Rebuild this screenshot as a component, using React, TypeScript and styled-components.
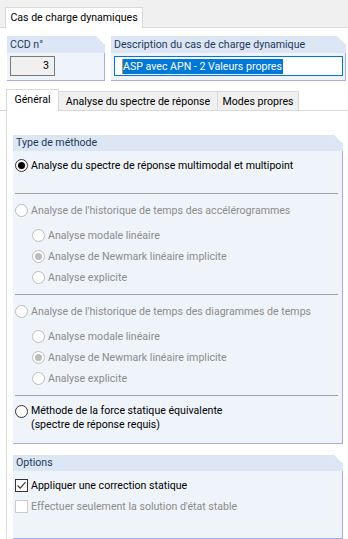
import React from 'react';
import styled, { createGlobalStyle } from 'styled-components';

const GlobalStyle = createGlobalStyle`
  html, body {
    margin: 0;
    padding: 0;
    background: #ffffff;
  }
  body {
    font-family: Roboto, 'Noto Sans', sans-serif;
    font-size: 10.6px;
    color: #000000;
    white-space: nowrap;
  }
`;

const navy = '#23395b';
const lavender = '#a9a9ec';
const headerBlue = '#dce6f4';
const bodyBlue = '#eff3fa';

const Window = styled.div`
  width: 348px;
  height: 539px;
  overflow: hidden;
  display: flex;
  flex-direction: column;
  background: #ffffff;
`;

const TopStrip = styled.div`
  box-sizing: border-box;
  height: 28px;
  padding: 7px 0 0 5px;
  display: flex;
  align-items: flex-end;
  background: #f0f0f0;
  border-bottom: 1px solid #d9d9d9;
`;

const TopTab = styled.div`
  box-sizing: border-box;
  width: 138px;
  height: 21px;
  margin-bottom: -1px;
  background: #ffffff;
  border: 1px solid #d9d9d9;
  border-bottom: none;
  display: flex;
  align-items: center;
  justify-content: center;
  padding-bottom: 1px;
`;

const HeaderRow = styled.div`
  display: flex;
  gap: 6px;
  padding: 8px 2px 0 7px;
`;

const Group = styled.div<{ $width?: number; $grow?: boolean }>`
  box-sizing: border-box;
  ${(p) => (p.$width ? `width: ${p.$width}px;` : '')}
  ${(p) => (p.$grow ? 'flex: 1;' : '')}
  display: flex;
  flex-direction: column;
  background: ${bodyBlue};
  border-right: 1px solid ${lavender};
  border-bottom: 1px solid ${lavender};
  clip-path: polygon(0 0, calc(100% - 9px) 0, 100% 9px, 100% 100%, 0 100%);
`;

const GroupTitle = styled.div<{ $height?: number }>`
  height: ${(p) => p.$height ?? 16}px;
  line-height: ${(p) => p.$height ?? 16}px;
  padding-left: 3px;
  background: ${headerBlue};
  color: ${navy};
  margin-right: -1px;
`;

const SmallBody = styled.div`
  padding: 3px 2px 4px 3px;
  display: flex;
`;

const NumberInput = styled.div`
  box-sizing: border-box;
  width: 45px;
  height: 20px;
  background: #f0f0f0;
  border: 1px solid #7a7a7a;
  text-align: right;
  padding-right: 5px;
  line-height: 18px;
`;

const TextInput = styled.div`
  box-sizing: border-box;
  flex: 1;
  height: 20px;
  border: 1px solid #0078d7;
  background: #ffffff;
  padding-left: 7px;
  display: flex;
  align-items: center;
`;

const Selected = styled.span`
  background: #0078d7;
  color: #ffffff;
  line-height: 15px;
  padding-right: 1px;
  border-left: 1px solid #e08a2c;
`;

const TabBar = styled.div`
  margin-top: 8px;
  height: 21px;
  padding-left: 6px;
  display: flex;
  align-items: flex-end;
  border-bottom: 1px solid #d9d9d9;
`;

const Tab = styled.div<{ $width: number; $active?: boolean }>`
  box-sizing: border-box;
  width: ${(p) => p.$width}px;
  height: ${(p) => (p.$active ? 22 : 19)}px;
  margin-bottom: ${(p) => (p.$active ? -1 : 0)}px;
  margin-right: -1px;
  background: ${(p) => (p.$active ? '#ffffff' : '#f0f0f0')};
  border: 1px solid #d9d9d9;
  border-bottom: none;
  position: relative;
  z-index: ${(p) => (p.$active ? 1 : 0)};
  display: flex;
  align-items: center;
  justify-content: center;
  padding-bottom: ${(p) => (p.$active ? 2 : 0)}px;
`;

const TabPage = styled.div`
  flex: 1;
  margin-left: 6px;
  border-left: 1px solid #d9d9d9;
  padding: 24px 5px 0 6px;
  display: flex;
  flex-direction: column;
`;

const GroupBody = styled.div<{ $pb?: number }>`
  display: flex;
  flex-direction: column;
  padding: 4px 0 ${(p) => p.$pb ?? 0}px 2px;
`;

const Row = styled.div<{ $indent?: boolean; $disabled?: boolean; $h?: number }>`
  height: ${(p) => p.$h ?? (p.$indent ? 21 : 20)}px;
  display: flex;
  align-items: center;
  gap: 3px;
  padding-left: ${(p) => (p.$indent ? 17 : 0)}px;
  color: ${(p) => (p.$disabled ? '#8c8c8c' : '#000000')};
`;

const MultiRow = styled.div`
  display: flex;
  align-items: flex-start;
  gap: 3px;
  margin-top: 8px;
  line-height: 14px;
`;

const SubList = styled.div`
  margin-top: 5px;
  display: flex;
  flex-direction: column;
`;

const Separator = styled.div<{ $top: number; $bottom: number }>`
  height: 1px;
  background: #a0a0a0;
  margin: ${(p) => p.$top}px 4px ${(p) => p.$bottom}px 0;
`;

const Radio = styled.span<{ $checked?: boolean; $disabled?: boolean }>`
  box-sizing: border-box;
  flex: none;
  width: 13px;
  height: 13px;
  border-radius: 50%;
  border: 1px solid ${(p) => (p.$disabled ? '#bcbcbc' : '#333333')};
  background: #ffffff;
  display: flex;
  align-items: center;
  justify-content: center;
  &::after {
    content: '';
    display: ${(p) => (p.$checked ? 'block' : 'none')};
    width: 7px;
    height: 7px;
    border-radius: 50%;
    background: ${(p) => (p.$disabled ? '#bcbcbc' : '#000000')};
  }
`;

const Check = styled.span<{ $disabled?: boolean }>`
  box-sizing: border-box;
  flex: none;
  width: 13px;
  height: 13px;
  border: 1px solid ${(p) => (p.$disabled ? '#cccccc' : '#333333')};
  background: #ffffff;
  display: flex;
  align-items: center;
  justify-content: center;
`;

const OptionsGroup = styled(Group)`
  margin-top: 11px;
  flex: 1;
`;

type Opt = { label: string; checked?: boolean };

const subOptions: Opt[] = [
  { label: 'Analyse modale linéaire' },
  { label: 'Analyse de Newmark linéaire implicite', checked: true },
  { label: 'Analyse explicite' },
];

function SubChoices() {
  return (
    <SubList>
      {subOptions.map((o) => (
        <Row key={o.label} $indent $disabled>
          <Radio $disabled $checked={o.checked} />
          {o.label}
        </Row>
      ))}
    </SubList>
  );
}

export default function App() {
  return (
    <Window>
      <GlobalStyle />
      <TopStrip>
        <TopTab>Cas de charge dynamiques</TopTab>
      </TopStrip>

      <HeaderRow>
        <Group $width={98}>
          <GroupTitle $height={17}>CCD n°</GroupTitle>
          <SmallBody>
            <NumberInput>3</NumberInput>
          </SmallBody>
        </Group>
        <Group $grow>
          <GroupTitle $height={17}>Description du cas de charge dynamique</GroupTitle>
          <SmallBody>
            <TextInput>
              <Selected>ASP avec APN - 2 Valeurs propres</Selected>
            </TextInput>
          </SmallBody>
        </Group>
      </HeaderRow>

      <TabBar>
        <Tab $width={53} $active>Général</Tab>
        <Tab $width={160}>Analyse du spectre de réponse</Tab>
        <Tab $width={82}>Modes propres</Tab>
      </TabBar>

      <TabPage>
        <Group>
          <GroupTitle>Type de méthode</GroupTitle>
          <GroupBody $pb={11}>
            <Row>
              <Radio $checked />
              Analyse du spectre de réponse multimodal et multipoint
            </Row>
            <Separator $top={18} $bottom={6} />
            <Row $disabled>
              <Radio $disabled />
              Analyse de l'historique de temps des accélérogrammes
            </Row>
            <SubChoices />
            <Separator $top={6} $bottom={6} />
            <Row $disabled>
              <Radio $disabled />
              Analyse de l'historique de temps des diagrammes de temps
            </Row>
            <SubChoices />
            <Separator $top={6} $bottom={0} />
            <MultiRow>
              <Radio style={{ marginTop: 1 }} />
              <span>
                Méthode de la force statique équivalente
                <br />
                (spectre de réponse requis)
              </span>
            </MultiRow>
          </GroupBody>
        </Group>

        <OptionsGroup>
          <GroupTitle>Options</GroupTitle>
          <GroupBody>
            <Row $h={21}>
              <Check>
                <svg width="11" height="11" viewBox="0 0 11 11">
                  <polyline points="1.5,5.5 4.2,8.2 9.5,2.2" fill="none" stroke="#333" strokeWidth="1.1" />
                </svg>
              </Check>
              Appliquer une correction statique
            </Row>
            <Row $h={21} $disabled>
              <Check $disabled />
              Effectuer seulement la solution d'état stable
            </Row>
          </GroupBody>
        </OptionsGroup>
      </TabPage>
    </Window>
  );
}
